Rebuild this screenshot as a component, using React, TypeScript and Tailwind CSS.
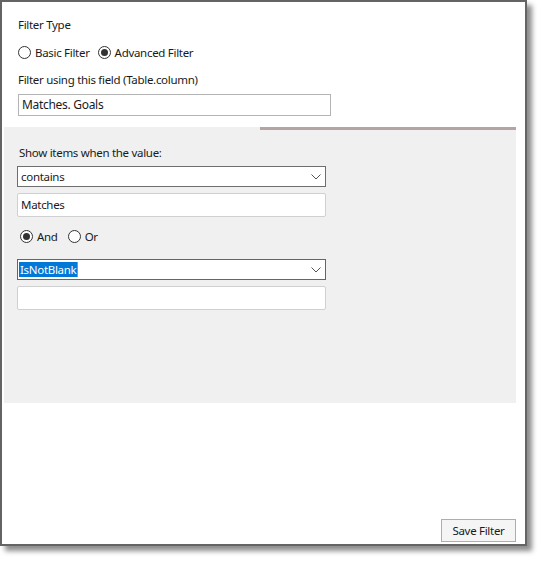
export default function App() {
  const f = { fontFamily: '"Noto Sans", "Open Sans", sans-serif' };
  const Radio = ({ on, label }: { on?: boolean; label: string }) => (
    <div className="flex items-center gap-[4px]">
      <div className="w-[13px] h-[13px] rounded-full border border-[#333] bg-white flex items-center justify-center">
        {on && <div className="w-[7px] h-[7px] rounded-full bg-[#333]" />}
      </div>
      <span>{label}</span>
    </div>
  );
  const Chevron = () => (
    <svg width="10" height="6" viewBox="0 0 10 6" className="mr-[4px]">
      <path d="M0.5 0.5 L5 5 L9.5 0.5" fill="none" stroke="#555" strokeWidth="1" />
    </svg>
  );
  return (
    <div className="w-[541px] h-[561px] bg-white text-[11.5px] tracking-[-0.3px] text-[#1a1a1a] leading-none" style={f}>
      <div className="w-[527px] h-[546px] border-2 border-[#646464] bg-white flex flex-col shadow-[5px_5px_5px_rgba(0,0,0,0.45)]">
        <div className="pl-[16px] pt-[17px]">
          <div className="h-[12px]">Filter Type</div>
          <div className="flex gap-[8px] mt-[15px]">
            <Radio label="Basic Filter" />
            <Radio on label="Advanced Filter" />
          </div>
          <div className="mt-[15px]">Filter using this field (Table.column)</div>
          <div className="mt-[8px] w-[313px] h-[22px] border border-[#b4b4b4] flex items-center px-[3px] text-[12px]">Matches. Goals</div>
        </div>
        <div className="mx-[2px] mt-[11px] w-[512px] h-[276px] bg-[#f0f0f0] relative pl-[13px] pt-[20px]">
          <div className="absolute right-0 top-0 w-[256px] h-[3px] bg-[#b5a5a2]" />
          <div className="ml-[2px]">Show items when the value:</div>
          <div className="mt-[8px] w-[309px] h-[21px] border border-[#6e6e6e] bg-white flex items-center justify-between pl-[3px]">
            <span>contains</span><Chevron />
          </div>
          <div className="mt-[6px] w-[309px] h-[24px] border border-[#d0d0d0] rounded-[2px] bg-white flex items-center px-[3px]">Matches</div>
          <div className="flex gap-[10px] ml-[3px] mt-[13px]">
            <Radio on label="And" />
            <Radio label="Or" />
          </div>
          <div className="mt-[16px] w-[309px] h-[21px] border border-[#1976d2] bg-white flex items-center justify-between pl-[1px]">
            <span className="bg-[#0078d7] text-white px-[1px] py-[2px] border-r border-[#e08030]">IsNotBlank</span><Chevron />
          </div>
          <div className="mt-[6px] w-[309px] h-[24px] border border-[#d0d0d0] rounded-[2px] bg-white" />
        </div>
        <div className="flex-1" />
        <div className="flex justify-end pr-[9px] pb-[2px]">
          <div className="w-[75px] h-[23px] border border-[#adadad] bg-[#f5f5f5] flex items-center justify-center">Save Filter</div>
        </div>
      </div>
    </div>
  );
}
